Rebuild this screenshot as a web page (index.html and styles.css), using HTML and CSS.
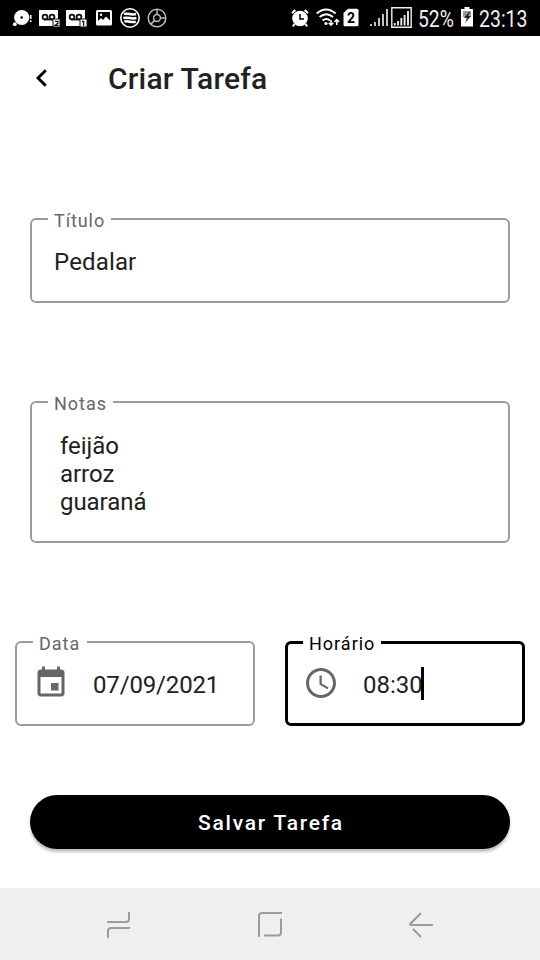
FILE: index.html
```html
<!DOCTYPE html>
<html lang="pt-BR">
<head>
<meta charset="utf-8">
<title>Criar Tarefa</title>
<link rel="stylesheet" href="styles.css">
</head>
<body>
<div class="screen">
  <header class="status">
    <div class="status-group">
      <svg width="20" height="20" viewBox="0 0 20 20"><circle cx="9.7" cy="9.5" r="7.6" fill="#fff"/><circle cx="9.7" cy="9.5" r="1.3"/><circle cx="2.8" cy="16.2" r="1.9" fill="#fff"/><path d="M18.7 7v4M18.7 12.2v1.8" stroke="#fff" stroke-width="1.6"/></svg>
      <svg class="voicemail" width="22" height="20" viewBox="0 0 22 20"><path fill="#fff" d="M0 2h19v16H0z"/><g fill="none" stroke="#111" stroke-width="1.8"><circle cx="6" cy="9" r="2.4"/><circle cx="13" cy="9" r="2.4"/><path d="M5 11.5h10"/></g><path d="M14 11h7v8h-7z" fill="#fff" stroke="#111"/><path d="M16 13.3h3v1.8l-3 2.2h3.5" fill="none" stroke="#111" stroke-width="1.2"/></svg>
      <svg class="voicemail-second" width="22" height="20" viewBox="0 0 22 20"><path fill="#fff" d="M0 2h19v16H0z"/><g fill="none" stroke="#111" stroke-width="1.8"><circle cx="6" cy="9" r="2.4"/><circle cx="13" cy="9" r="2.4"/><path d="M5 11.5h10"/></g><path d="M14 11h7v8h-7z" fill="#fff" stroke="#111"/><path d="M16 13.5h1.6V18" fill="none" stroke="#111" stroke-width="1.3"/></svg>
      <svg class="photo" width="16" height="20" viewBox="0 0 16 20"><rect y="2" width="16" height="15.5" rx="1.5" fill="#fff"/><path d="M2 4h12v8.5L10 8.5l-3 3.5-2-2-3 3z"/><circle cx="5" cy="6.8" r="1.2" fill="#fff"/></svg>
      <svg class="waves" width="20" height="20" viewBox="0 0 20 20"><g fill="none" stroke="#fff"><circle cx="10" cy="10" r="9.2" stroke-width="1.6"/><path d="M4 6c4-1.5 7 1.6 12 0M3.4 10c5-1.5 8 1.6 13 0M4.3 13.7c4-1.5 7 1.6 11.5 0" stroke-width="2.5"/></g></svg>
      <svg class="ring" width="20" height="20" viewBox="0 0 20 20"><g fill="none" stroke="#bbb" stroke-width="1.5"><circle cx="10" cy="10" r="8.8"/><circle cx="10" cy="10" r="3.4"/><path d="M10 1v5.6M13.4 10H19M7.6 12.4l-4 4"/></g></svg>
    </div>
    <div class="status-group">
      <svg class="alarm" width="18" height="20" viewBox="0 0 18 20"><circle cx="9" cy="10.5" r="7.8" fill="#fff"/><path d="M9 6v5h4" fill="none" stroke="#000" stroke-width="1.5"/><path d="M1 5.3 4.3 2M17 5.3 13.7 2M3.5 16 2 18.6M14.5 16l1.5 2.6" stroke="#fff" stroke-width="2"/></svg>
      <svg class="wifi" width="24" height="20" viewBox="0 0 24 20"><g fill="none" stroke="#fff" stroke-width="2"><path d="M.8 5.5q9.2-8 18.8 0M3.6 9.1q6.6-5.6 13.4 0M6.6 12.5q3.6-3 7.4 0"/></g><circle cx="10" cy="15.5" r="1.6" fill="#fff"/><path d="M15 12v5M12.7 14.7 15 17.2l2.3-2.5M20.8 17v-5M18.5 14l2.3-2.5 2.3 2.5" fill="none" stroke="#fff" stroke-width="1.5"/></svg>
      <svg class="sim" width="16" height="20" viewBox="0 0 16 20"><path d="M5 .7h9q1.5 0 1.5 1.5v14.6q0 1.5-1.5 1.5H2q-1.5 0-1.5-1.5V5z" fill="#fff"/><text class="sim-number" x="8" y="14.5" text-anchor="middle">2</text></svg>
      <svg class="signal" width="18" height="20" viewBox="0 0 18 20"><path d="M1 16v2M5 14v4M9 10v8M13 6v12M17 1v17" stroke="#d8d8d8" stroke-width="1.8"/></svg>
      <svg class="signal-box" width="21" height="22" viewBox="0 0 21 22"><path d="M.8.8h19.4v19.4H.8z" fill="none" stroke="#eee" stroke-width="1.4"/><path d="M3.7 16v2.5M7 14v4.5M10.3 11v7.5M13.6 8v10.5M17 4v14.5" stroke="#e8e8e8" stroke-width="1.9"/></svg>
      <svg class="percent" width="36" height="34" viewBox="0 0 43 34" preserveAspectRatio="none"><text class="status-text" x="0" y="26">52%</text></svg>
      <svg class="battery" width="12" height="20" viewBox="0 0 12 20"><path d="M3.5 0h5v2H12v17.5H0V2h3.5z" fill="#fff"/><path d="M2 4h8v6H2z" fill="#999"/><path d="M8 5 3 11h3l-2 5 6-7H7l2-4z" fill="#222"/></svg>
      <svg class="clock-text" width="50" height="34" viewBox="0 0 59 34" preserveAspectRatio="none"><text class="status-text" x="0" y="26">23:13</text></svg>
    </div>
  </header>

  <div class="appbar">
    <svg class="back" width="14" height="20" viewBox="0 0 14 20"><path d="M11.8 2.2 4 10l7.8 7.8" fill="none" stroke="#000" stroke-width="2.9"/></svg>
    <h1 class="title">Criar Tarefa</h1>
  </div>

  <main class="form">
    <div class="field field-title"><span class="label">Título</span><span class="value">Pedalar</span></div>
    <div class="field field-notes"><span class="label">Notas</span><span class="value">feijão<br>arroz<br>guaraná</span></div>
    <div class="row">
      <div class="field field-date">
        <span class="label">Data</span>
        <svg class="calendar" width="36" height="36" viewBox="0 0 24 24"><path fill="#666" d="M17 12h-5v5h5v-5zM16 1v2H8V1H6v2H5c-1.11 0-1.99.9-1.99 2L3 19c0 1.1.89 2 2 2h14c1.1 0 2-.9 2-2V5c0-1.1-.9-2-2-2h-1V1h-2zm3 18H5V8h14v11z"/></svg>
        <span class="value">07/09/2021</span>
      </div>
      <div class="field field-time">
        <span class="label">Horário</span>
        <svg class="clock" width="36" height="36" viewBox="0 0 24 24"><path fill="#666" d="M11.99 2C6.47 2 2 6.48 2 12s4.47 10 9.99 10C17.52 22 22 17.52 22 12S17.52 2 11.99 2zM12 20c-4.42 0-8-3.58-8-8s3.58-8 8-8 8 3.58 8 8-3.58 8-8 8zm.5-13H11v6l5.25 3.15.75-1.23-4.5-2.67z"/></svg>
        <span class="value">08:30</span><span class="caret"></span>
      </div>
    </div>
    <button class="save" type="button">Salvar Tarefa</button>
  </main>

  <nav class="nav">
    <svg width="26" height="28" viewBox="0 0 26 28"><path d="M1 11h19q3 0 3-3V1M24 17H5q-3 0-3 3v7" fill="none" stroke="#9c9c9c" stroke-width="2"/></svg>
    <svg width="26" height="28" viewBox="0 0 26 28"><path d="M2 26V5q0-3 3-3h20M24 7.500v14q0 3-3 3H7" fill="none" stroke="#9c9c9c" stroke-width="2"/></svg>
    <svg width="26" height="28" viewBox="0 0 26 28"><path d="M13 2 2.5 12.5Q1.5 14 3 14h22M5 18l8 8" fill="none" stroke="#9c9c9c" stroke-width="2"/></svg>
  </nav>
</div>
</body>
</html>
```
FILE: styles.css
```css
* { box-sizing: border-box; }
body { margin: 0; background: #fff; font-family: Roboto, sans-serif; color: #212121; }
svg { display: block; flex: none; }
.screen { width: 540px; height: 960px; display: flex; flex-direction: column; }

.status { height: 36px; background: #000; display: flex; justify-content: space-between; padding: 0 11px 0 12px; }
.status-group { display: flex; align-items: center; }
.voicemail { margin-left: 7px; }
.voicemail-second { margin-left: 5px; }
.photo { margin-left: 8px; }
.waves { margin-left: 8px; }
.ring { margin-left: 7px; }
.wifi { margin-left: 7px; }
.sim { margin-left: 3px; }
.signal { margin-left: 11px; }
.signal-box { margin-left: 3px; }
.percent { margin-left: 6px; }
.battery { margin-left: 7px; margin-bottom: 2px; }
.clock-text { margin-left: 6px; }
.status-text { font-size: 23px; fill: #f0f0f0; }
.sim-number { font-size: 14px; font-weight: 700; }

.appbar { height: 84px; display: flex; align-items: center; padding-left: 34px; }
.back { margin-right: 60px; }
.title { margin: 2px 0 0; font-size: 30px; font-weight: 500; line-height: 36px; letter-spacing: 0.2px; }

.form { flex: 1; display: flex; flex-direction: column; padding: 98px 30px 0; }
.field { position: relative; border: 2px solid #9b9b9b; border-radius: 6px; height: 85px; display: flex; }
.label { position: absolute; left: 16px; top: -10px; padding: 0 6px; background: #fff; color: #666; font-size: 18px; line-height: 22px; letter-spacing: 0.9px; white-space: nowrap; }
.value { font-size: 24px; line-height: 28px; white-space: nowrap; }
.field-title { padding: 28px 22px 0; }
.field-title .value { letter-spacing: 0.15px; }
.field-notes { height: 142px; margin-top: 98px; padding: 29px 28px 0; }
.field-notes .value { letter-spacing: -0.05px; }
.field-notes .label, .field-date .label { letter-spacing: 1px; }
.row { display: grid; grid-template-columns: 240px 240px; gap: 30px; margin: 98px -15px 0; }
.field-date { padding-left: 16px; }
.field-date .label { padding-right: 7px; }
.calendar { margin-top: 22px; }
.field-date .value { margin: 28px 0 0 24px; letter-spacing: -0.15px; }
.field-time { border: 3px solid #000; padding-left: 15px; }
.field-time .label { top: -11px; left: 15px; color: #000; letter-spacing: 1px; }
.clock { margin-top: 21px; }
.field-time .value { margin: 27px 0 0 24px; }
.caret { width: 3px; height: 33px; background: #000; margin: 23px 0 0 -2px; }

.save { height: 54px; margin-top: 69px; padding: 2px 0 0 2px; border: 0; border-radius: 27px; background: #000; color: #fff; font: 500 21px/24px Roboto, sans-serif; letter-spacing: 1.75px; box-shadow: 0 3px 3px rgba(0, 0, 0, 0.25); }

.nav { height: 72px; background: #efefef; display: flex; justify-content: space-between; align-items: center; padding: 2px 106px 0; }
```
